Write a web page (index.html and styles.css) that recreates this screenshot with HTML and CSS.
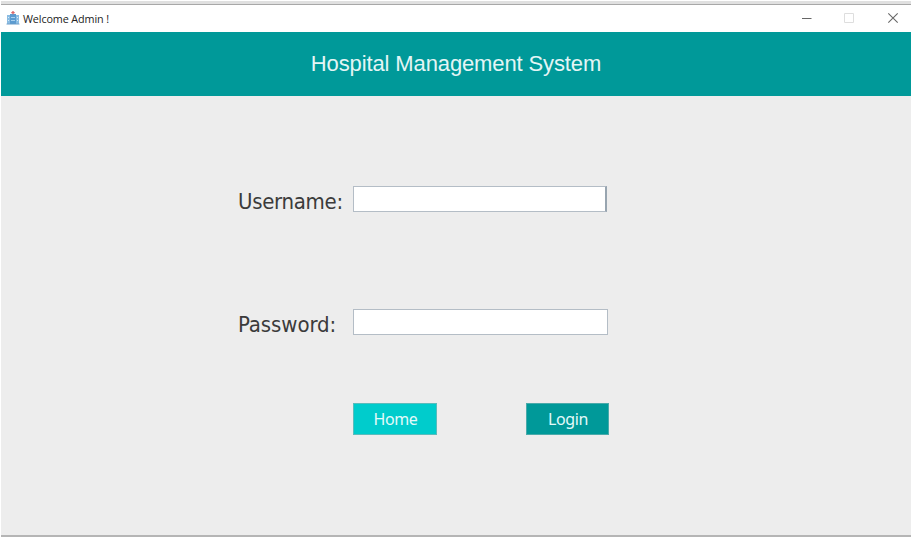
FILE: index.html
```html
<!DOCTYPE html>
<html lang="en">
<head>
<meta charset="utf-8">
<title>Welcome Admin !</title>
<link rel="stylesheet" href="styles.css">
</head>
<body>
<div class="window">
  <header class="titlebar">
    <svg class="app-icon" width="14" height="14" viewBox="0 0 14 14">
      <path fill="#8bbce2" d="M1 4h3v9H1zM10 4h3v9h-3z"/>
      <path fill="#5b9bd0" d="M4 3h6v10H4z"/>
      <path fill="#d8ecfa" d="M2 6h1v1H2zM2 9h1v1H2zM11 6h1v1h-1zM11 9h1v1h-1z"/>
      <path fill="#a9d0ee" d="M5 6h4v1H5zM5 9h4v1H5z"/>
      <path fill="#d9696c" d="M6.3 0h1.4v1h1v1.3h-1v1H6.3v-1h-1V1h1z"/>
      <path fill="#6b9dc8" d="M.5 12.6h13v.9H.5z"/>
    </svg>
    <span class="window-title">Welcome Admin !</span>
    <div class="controls">
      <svg width="12" height="12" viewBox="0 0 12 12"><path d="M1 6.5h9.5" stroke="#666"/></svg>
      <svg width="12" height="12" viewBox="0 0 12 12"><path d="M.5 1.5h9v9h-9z" fill="none" stroke="#dedede"/></svg>
      <svg width="12" height="12" viewBox="0 0 12 12"><path d="M1.3 1.3l9.4 9.4M10.7 1.3l-9.4 9.4" stroke="#686868" stroke-width="1.1"/></svg>
    </div>
  </header>
  <div class="banner"><h1>Hospital Management System</h1></div>
  <form class="login">
    <div class="field">
      <label class="label-user" for="username">Username:</label>
      <input class="input-user" id="username" type="text">
    </div>
    <div class="field field-password">
      <label class="label-pass" for="password">Password:</label>
      <input class="input-pass" id="password" type="password">
    </div>
    <div class="actions">
      <button class="home" type="button">Home</button>
      <button class="submit" type="button">Login</button>
    </div>
  </form>
</div>
</body>
</html>
```
FILE: styles.css
```css
* { box-sizing: border-box; }
body { margin: 0; background: #fff; overflow: hidden; }
.window {
  display: flex;
  flex-direction: column;
  width: 910px;
  height: 536px;
  margin: 1px 0 0 1px;
  border-top: 3px solid #e0e0e0;
  border-bottom: 2px solid #b5b5b5;
  background: #ededed;
}
.titlebar {
  display: flex;
  align-items: center;
  height: 28px;
  padding: 0 12px 1px 5px;
  border-top: 1px solid #a8a8a8;
  background: #fff;
}
.app-icon { margin-top: -1px; }
.window-title {
  margin: 1px 0 0 3px;
  font: 10.8px/14px "Open Sans", sans-serif;
  letter-spacing: -0.12px;
  color: #222;
}
.controls { display: flex; gap: 31px; margin-left: auto; }
.controls svg { display: block; }
.banner {
  height: 64px;
  background: #009999;
  text-align: center;
}
.banner h1 {
  margin: 0;
  font: 400 22px/64px "Liberation Sans", Arial, sans-serif;
  letter-spacing: -0.12px;
  color: #e4f5f5;
}
.login { padding: 90px 0 0 237px; }
.field { display: flex; height: 27px; }
.field-password { margin-top: 96px; }
.field label {
  width: 115px;
  font: 22px/32px "DejaVu Sans Condensed", "DejaVu Sans", sans-serif;
  font-stretch: condensed;
  letter-spacing: -0.3px;
  color: #3b3b3b;
}
.field label.label-pass { letter-spacing: -0.1px; }
.field input {
  width: 254px;
  height: 26px;
  padding: 0 4px;
  border: 1px solid #b4bdc6;
  border-radius: 0;
  outline: 0;
  background: #fff;
}
.field .input-user { border-right: 2px solid #98a5b0; }
.field .input-pass { width: 255px; }
.actions { display: flex; gap: 89px; margin: 67px 0 0 115px; }
.actions button {
  width: 84px;
  height: 32px;
  padding: 0 0 0 1px;
  border: 1px solid #49aaaa;
  border-radius: 0;
  font: 16px/30px "Noto Sans", sans-serif;
  letter-spacing: -0.4px;
  color: #e4fafa;
}
.actions .home { background: #00cccc; border-color: #59bcbc; }
.actions .submit { width: 83px; background: #009999; }
```
